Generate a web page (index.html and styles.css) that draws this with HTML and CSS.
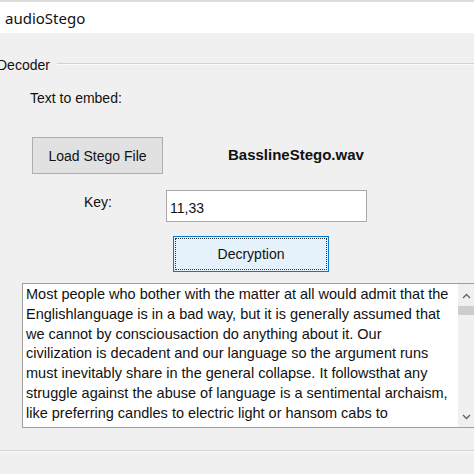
FILE: index.html
```html
<!DOCTYPE html>
<html>
<head>
    <title>audioStego</title>
    <link rel="stylesheet" href="styles.css">
</head>
<body>
    <div class="window">
        <div class="titlebar">audioStego</div>

        <div class="group">
            <div class="group-title">
                <span class="legend">Decoder</span>
                <span class="etch"></span>
            </div>

            <div class="embed-label">Text to embed:</div>

            <div class="load-row">
                <button class="btn load-btn">Load Stego File</button>
                <span class="file-name">BasslineStego.wav</span>
            </div>

            <div class="key-row">
                <label for="key" class="key-label">Key:</label>
                <input type="text" id="key" class="key-input" value="11,33">
            </div>

            <button class="btn decrypt-btn">Decryption</button>

            <div class="text-box">
                <div class="text-content">
                    Most people who bother with the matter at all would admit that the<br>
                    Englishlanguage is in a bad way, but it is generally assumed that<br>
                    we cannot by consciousaction do anything about it. Our<br>
                    civilization is decadent and our language so the argument runs<br>
                    must inevitably share in the general collapse. It followsthat any<br>
                    struggle against the abuse of language is a sentimental archaism,<br>
                    like preferring candles to electric light or hansom cabs to<br>
                    aeroplanes. Underneath this lies the half-conscious belief that
                </div>
                <div class="scrollbar">
                    <svg class="arrow" width="17" height="22" viewBox="0 0 17 22">
                        <path d="M5 14 L8.5 10.5 L12 14" fill="none" stroke="#606060" stroke-width="1.3"/>
                    </svg>
                    <div class="thumb"></div>
                    <div class="track"></div>
                    <svg class="arrow" width="17" height="20" viewBox="0 0 17 20">
                        <path d="M5 8 L8.5 11.5 L12 8" fill="none" stroke="#606060" stroke-width="1.3"/>
                    </svg>
                </div>
            </div>

            <div class="group-bottom"></div>
        </div>
    </div>
</body>
</html>
```

FILE: styles.css
```css
body {
    margin: 0;
    padding: 0;
    background-color: #f0f0f0;
    font-family: 'Liberation Sans', Arial, sans-serif;
    font-size: 14px;
    color: #111111;
    overflow: hidden;
}

.window {
    width: 474px;
    height: 474px;
    overflow: hidden;
}

.titlebar {
    height: 31px;
    line-height: 32px;
    border-top: 2px solid #dcdcdc;
    background-color: #ffffff;
    padding-left: 5px;
    font-family: 'Noto Sans', sans-serif;
    font-size: 15px;
    color: #111111;
}

.group-title {
    display: flex;
    align-items: center;
    margin-top: 24px;
    margin-left: -3px;
    height: 16px;
    line-height: 16px;
}

.legend {
    padding-right: 7px;
}

.etch {
    flex: 1;
    height: 0;
    border-top: 1px solid #d2d2d2;
    border-bottom: 1px solid #fbfbfb;
    margin-top: -3px;
}

.embed-label {
    margin-top: 17px;
    margin-left: 30px;
    line-height: 16px;
}

.btn {
    font-family: 'Liberation Sans', Arial, sans-serif;
    font-size: 14px;
    color: #111111;
    padding: 0;
    box-sizing: border-box;
}

.load-row {
    display: flex;
    align-items: center;
    margin-top: 31px;
}

.load-btn {
    margin-left: 32px;
    width: 131px;
    height: 37px;
    background-color: #e1e1e1;
    border: 1px solid #adadad;
}

.file-name {
    margin-left: 65px;
    font-weight: bold;
    font-size: 15px;
    margin-top: -2px;
}

.key-row {
    display: flex;
    align-items: center;
    margin-top: 16px;
}

.key-label {
    margin-left: 84px;
    width: 82px;
    margin-top: -8px;
}

.key-input {
    width: 201px;
    height: 32px;
    box-sizing: border-box;
    border: 1px solid #a8a8a8;
    background-color: #ffffff;
    padding: 4px 3px 0 3px;
    margin: 0;
    font-family: 'Liberation Sans', Arial, sans-serif;
    font-size: 14px;
    color: #111111;
}

.decrypt-btn {
    display: block;
    margin-top: 14px;
    margin-left: 173px;
    width: 156px;
    height: 36px;
    background-color: #e5f1fb;
    border: 1px solid #0078d7;
    outline: 1px dotted #333333;
    outline-offset: -3px;
}

.text-box {
    display: flex;
    margin-top: 11px;
    margin-left: 22px;
    width: 454px;
    height: 145px;
    box-sizing: border-box;
    border: 1px solid #a0a0a0;
    background-color: #ffffff;
    overflow: hidden;
}

.text-content {
    flex: 1;
    padding: 1px 0 0 3px;
    font-size: 14.5px;
    line-height: 19.8px;
    white-space: nowrap;
    overflow: hidden;
}

.scrollbar {
    width: 17px;
    display: flex;
    flex-direction: column;
    background-color: #f0f0f0;
}

.arrow {
    display: block;
    flex: none;
}

.thumb {
    height: 9px;
    background-color: #cdcdcd;
}

.track {
    flex: 1;
}

.group-bottom {
    margin-top: 22px;
    border-top: 1px solid #d2d2d2;
    border-bottom: 1px solid #fbfbfb;
}
```
